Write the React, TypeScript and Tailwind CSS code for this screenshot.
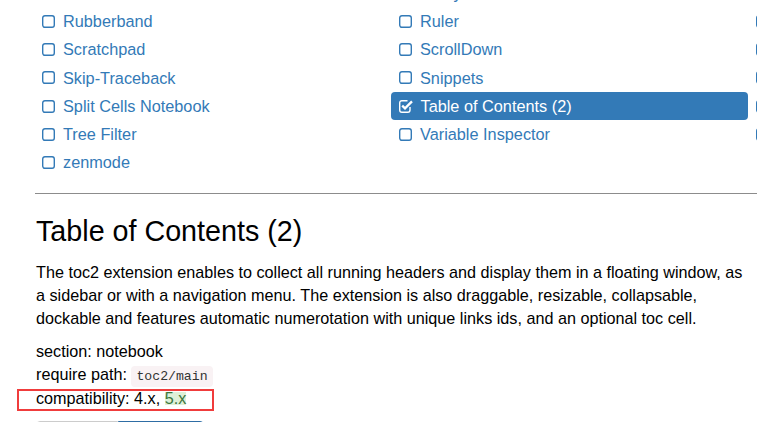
import React from "react";

const rows: string[][] = [
  ["nbTranslate", "Notify", "Printview"],
  ["Rubberband", "Ruler", "Ruler in Editor"],
  ["Scratchpad", "ScrollDown", "Select CodeMirror Keymap"],
  ["Skip-Traceback", "Snippets", "Snippets Menu"],
  ["Split Cells Notebook", "Table of Contents (2)", "table_beautifier"],
  ["Tree Filter", "Variable Inspector", "Toggle all line numbers"],
  ["zenmode"],
];

function BoxIcon() {
  return (
    <svg width="13" height="13" viewBox="0 0 13 13" className="shrink-0">
      <rect x="0.7" y="0.7" width="11.6" height="11.6" rx="2.2" fill="none" stroke="#337ab7" strokeWidth="1.4" />
    </svg>
  );
}

function CheckIcon() {
  return (
    <svg width="14" height="13" viewBox="0 0 14 13" className="shrink-0">
      <path
        d="M11 7 V10.1 A2.2 2.2 0 0 1 8.8 12.3 H2.9 A2.2 2.2 0 0 1 0.7 10.1 V2.9 A2.2 2.2 0 0 1 2.9 0.7 H8.5"
        fill="none"
        stroke="#fff"
        strokeWidth="1.4"
      />
      <path d="M3.2 5.6 L6 8.4 L13 1.4" fill="none" stroke="#fff" strokeWidth="2.3" />
    </svg>
  );
}

export default function App() {
  return (
    <div className="relative w-[757px] h-[422px] overflow-hidden bg-white font-['Liberation_Sans',Arial,sans-serif] text-black">
      <div className="grid grid-cols-[357px_357px_357px] w-max ml-[34px] -mt-[21px]">
        {rows.flatMap((r, ri) =>
          r.map((label, ci) => {
            const sel = label === "Table of Contents (2)";
            return (
              <div
                key={ri + "-" + ci}
                className={
                  sel
                    ? "flex items-center h-[28.25px] px-2 gap-[7.5px] rounded-[4px] bg-[#337ab7] text-white text-[16.3px] whitespace-nowrap"
                    : "flex items-center h-[28.25px] px-2 gap-[8px] text-[#337ab7] text-[16.3px] whitespace-nowrap"
                }
              >
                {sel ? <CheckIcon /> : <BoxIcon />}
                <span>{label}</span>
              </div>
            );
          })
        )}
      </div>

      <div className="pl-[35px]">
        <div className="mt-[16px] h-px w-[740px] bg-[#8c8c8c]" />
        <h2 className="ml-px mt-[22px] text-[28.7px] leading-[1.1] font-normal">Table of Contents (2)</h2>
        <p className="ml-px mt-[13.5px] w-[712px] text-[16.2px] leading-[23px]">
          The toc2 extension enables to collect all running headers and display them in a floating window, as a
          sidebar or with a navigation menu. The extension is also draggable, resizable, collapsable, dockable and
          features automatic numerotation with unique links ids, and an optional toc cell.
        </p>
        <div className="ml-px mt-[10px] text-[16.2px] leading-[23.6px]">
          <div>section: notebook</div>
          <div>
            require path:{" "}
            <code className="font-['Liberation_Mono','Courier_New',monospace] text-[13.2px] leading-none px-[5px] py-[3px] rounded-[4px] bg-[#f9f2f4] text-[#333]">
              toc2/main
            </code>
          </div>
          <div>
            compatibility: 4.x,{" "}
            <span className="inline-block h-[13px] leading-[13px] bg-[#dff0d8] text-[#3c763d]">5.x</span>
          </div>
        </div>
        <div className="ml-px mt-[10px] flex">
          <div className="w-[82px] h-[34px] border border-[#ccc] rounded-l-[4px] bg-white flex items-center justify-center text-[14px] text-[#333]">
            Enable
          </div>
          <div className="w-[86px] h-[34px] border border-[#2e6da4] rounded-r-[4px] bg-[#337ab7] flex items-center justify-center text-[14px] text-white">
            Disable
          </div>
        </div>
      </div>

      <div className="absolute left-[17px] top-[389px] w-[197px] h-[22px] border-2 border-[#f03c3c]" />
    </div>
  );
}
